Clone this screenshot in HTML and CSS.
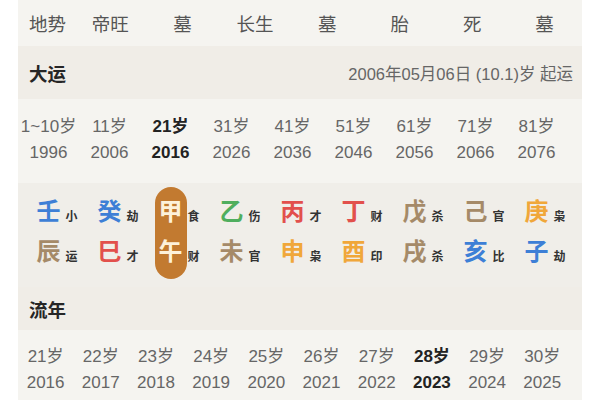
FILE: index.html
```html
<!DOCTYPE html>
<html lang="zh-CN">
<head>
<meta charset="utf-8">
<title>大运流年</title>
<link rel="stylesheet" href="styles.css">
</head>
<body>
<div class="panel">
  <div class="dishi">
    <span class="first">地势</span><span>帝旺</span><span>墓</span><span>长生</span><span>墓</span><span>胎</span><span>死</span><span>墓</span>
  </div>
  <div class="head">
    <span class="title">大运</span>
    <span class="start">2006年05月06日 (10.1)岁 起运</span>
  </div>
  <div class="ages dayun">
    <div class="cell"><div>1~10岁</div><div>1996</div></div>
    <div class="cell"><div>11岁</div><div>2006</div></div>
    <div class="cell cur"><div>21岁</div><div>2016</div></div>
    <div class="cell"><div>31岁</div><div>2026</div></div>
    <div class="cell"><div>41岁</div><div>2036</div></div>
    <div class="cell"><div>51岁</div><div>2046</div></div>
    <div class="cell"><div>61岁</div><div>2056</div></div>
    <div class="cell"><div>71岁</div><div>2066</div></div>
    <div class="cell"><div>81岁</div><div>2076</div></div>
  </div>
  <div class="pillars">
    <div class="pillar"><div class="stack">
      <div class="gz c-water">壬<span class="ss">小</span></div>
      <div class="gz c-earth">辰<span class="ss">运</span></div>
    </div></div>
    <div class="pillar"><div class="stack">
      <div class="gz c-water">癸<span class="ss">劫</span></div>
      <div class="gz c-fire">巳<span class="ss">才</span></div>
    </div></div>
    <div class="pillar"><div class="stack active">
      <div class="gz">甲<span class="ss">食</span></div>
      <div class="gz">午<span class="ss">财</span></div>
    </div></div>
    <div class="pillar"><div class="stack">
      <div class="gz c-wood">乙<span class="ss">伤</span></div>
      <div class="gz c-earth">未<span class="ss">官</span></div>
    </div></div>
    <div class="pillar"><div class="stack">
      <div class="gz c-fire">丙<span class="ss">才</span></div>
      <div class="gz c-metal">申<span class="ss">枭</span></div>
    </div></div>
    <div class="pillar"><div class="stack">
      <div class="gz c-fire">丁<span class="ss">财</span></div>
      <div class="gz c-metal">酉<span class="ss">印</span></div>
    </div></div>
    <div class="pillar"><div class="stack">
      <div class="gz c-earth">戊<span class="ss">杀</span></div>
      <div class="gz c-earth">戌<span class="ss">杀</span></div>
    </div></div>
    <div class="pillar"><div class="stack">
      <div class="gz c-earth">己<span class="ss">官</span></div>
      <div class="gz c-water">亥<span class="ss">比</span></div>
    </div></div>
    <div class="pillar"><div class="stack">
      <div class="gz c-metal">庚<span class="ss">枭</span></div>
      <div class="gz c-water">子<span class="ss">劫</span></div>
    </div></div>
  </div>
  <div class="head head2">
    <span class="title">流年</span>
  </div>
  <div class="ages liunian">
    <div class="cell"><div>21岁</div><div>2016</div></div>
    <div class="cell"><div>22岁</div><div>2017</div></div>
    <div class="cell"><div>23岁</div><div>2018</div></div>
    <div class="cell"><div>24岁</div><div>2019</div></div>
    <div class="cell"><div>25岁</div><div>2020</div></div>
    <div class="cell"><div>26岁</div><div>2021</div></div>
    <div class="cell"><div>27岁</div><div>2022</div></div>
    <div class="cell cur"><div>28岁</div><div>2023</div></div>
    <div class="cell"><div>29岁</div><div>2024</div></div>
    <div class="cell"><div>30岁</div><div>2025</div></div>
  </div>
</div>
</body>
</html>
```

FILE: styles.css
```css
html, body {
  margin: 0;
  padding: 0;
  background: #ffffff;
}
body {
  font-family: "Liberation Sans", "Noto Sans CJK SC", sans-serif;
  color: #666;
  overflow: hidden;
  height: 400px;
}
.panel {
  margin-left: 18px;
  width: 564px;
}
.dishi {
  height: 46px;
  background: #f5f4f0;
  display: grid;
  grid-template-columns: 56px repeat(7, 72.4px);
  align-items: center;
  font-family: "Noto Sans CJK SC", sans-serif;
  font-size: 18.5px;
  color: #555;
}
.dishi span {
  text-align: center;
  line-height: 24px;
}
.dishi span.first {
  text-align: left;
  padding-left: 11px;
}
.head {
  height: 53px;
  background: #f0ede7;
  display: flex;
  align-items: center;
  justify-content: space-between;
  padding: 0 9px 0 11px;
}
.head .title {
  font-family: "Noto Sans CJK SC", sans-serif;
  font-size: 18.5px;
  font-weight: bold;
  color: #262626;
}
.head .start {
  font-size: 16.5px;
  color: #666;
}
.head2 {
  height: 43px;
}
.ages {
  background: #f5f4f0;
  display: grid;
  padding-top: 15px;
  font-size: 17px;
  line-height: 26px;
}
.ages.dayun {
  height: 69px;
  grid-template-columns: repeat(9, 61px);
}
.ages.liunian {
  height: 56px;
  padding-top: 14px;
  grid-template-columns: repeat(10, 55.2px);
}
.cell {
  text-align: center;
  white-space: nowrap;
}
.cell.cur {
  color: #222;
  font-weight: bold;
}
.pillars {
  height: 104px;
  background: #f0eee9;
  display: grid;
  grid-template-columns: repeat(9, 61px);
}
.pillar {
  display: flex;
  justify-content: center;
  padding-top: 4px;
}
.stack {
  width: 32px;
  height: 92px;
  box-sizing: border-box;
  padding-top: 3px;
  border-radius: 16px;
}
.stack.active {
  background: #c27a30;
  color: #fdf1da;
}
.gz {
  position: relative;
  height: 40px;
  line-height: 40px;
  text-align: center;
  font-family: "Noto Sans CJK SC", sans-serif;
  font-size: 24px;
  font-weight: bold;
}
.gz .ss {
  position: absolute;
  left: 100%;
  margin-left: 1px;
  top: 20px;
  line-height: 1;
  font-size: 12px;
  font-weight: bold;
  color: #333;
  white-space: nowrap;
}
.c-water { color: #3d7fd6; }
.c-wood { color: #4fae5e; }
.c-fire { color: #e2504c; }
.c-earth { color: #a58a68; }
.c-metal { color: #f0a73a; }
```
